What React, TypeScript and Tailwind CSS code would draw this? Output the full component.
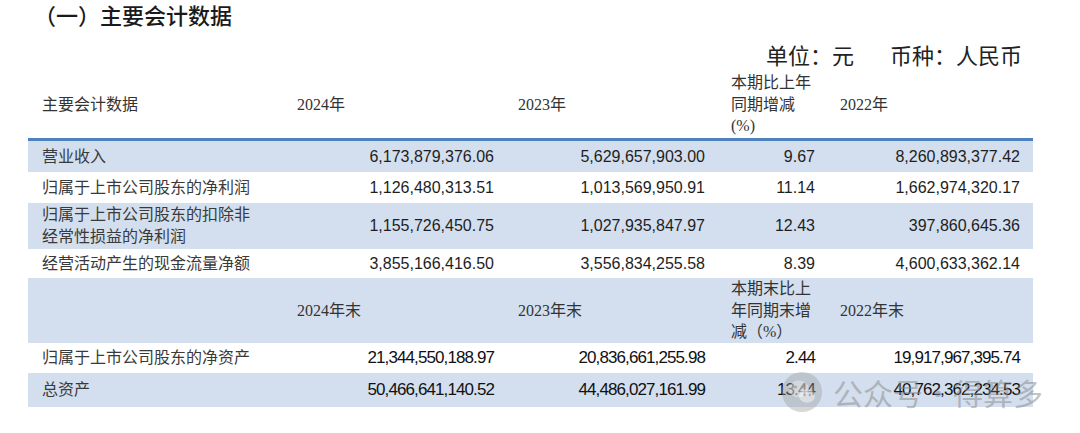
import React from "react";

const cjk = "font-['Liberation_Serif','Noto_Sans_CJK_SC',serif]";
const num = "font-['Liberation_Sans',Arial,sans-serif]";

type Row = {
  label: React.ReactNode;
  values: string[];
  h: string;
  blue?: boolean;
  big?: boolean;
};

const rows: Row[] = [
  { label: "营业收入", values: ["6,173,879,376.06", "5,629,657,903.00", "9.67", "8,260,893,377.42"], h: "h-[31px]", blue: true },
  { label: "归属于上市公司股东的净利润", values: ["1,126,480,313.51", "1,013,569,950.91", "11.14", "1,662,974,320.17"], h: "h-[31px]" },
  {
    label: (
      <>
        归属于上市公司股东的扣除非
        <br />
        经常性损益的净利润
      </>
    ),
    values: ["1,155,726,450.75", "1,027,935,847.97", "12.43", "397,860,645.36"],
    h: "h-[46px]",
    blue: true,
  },
  { label: "经营活动产生的现金流量净额", values: ["3,855,166,416.50", "3,556,834,255.58", "8.39", "4,600,633,362.14"], h: "h-[29px]" },
];

const rows2: Row[] = [
  { label: "归属于上市公司股东的净资产", values: ["21,344,550,188.97", "20,836,661,255.98", "2.44", "19,917,967,395.74"], h: "h-[30px]", big: true },
  { label: "总资产", values: ["50,466,641,140.52", "44,486,027,161.99", "13.44", "40,762,362,234.53"], h: "h-[34px]", blue: true, big: true },
];

const pads = ["pr-[17px]", "pr-[19px]", "pr-[18px]", "pr-[13px]"];

const grid = "grid grid-cols-[262px_221px_213px_109px_200px] items-center";

const DataRow = ({ row }: { row: Row }) => (
  <div className={`${grid} ${row.h} ${row.blue ? "bg-[#d3dfee]" : "bg-white"}`}>
    <div className={`${cjk} pl-[14px] text-[16px] leading-[22px] text-[#3a3a3a]`}>{row.label}</div>
    {row.values.map((v, i) => (
      <div
        key={i}
        className={`${num} ${pads[i]} text-right ${
          row.big ? "text-[17px] tracking-[-0.9px] text-[#111]" : "text-[16px] text-[#1e1e1e]"
        }`}
      >
        {v}
      </div>
    ))}
  </div>
);

const HeadCell = ({ children }: { children: React.ReactNode }) => (
  <div className={`${cjk} pl-[7px] text-[16px] leading-[21.5px] text-[#333]`}>{children}</div>
);

const WeChatIcon = () => (
  <svg width="40" height="40" viewBox="0 0 40 40">
    <circle cx="20" cy="20" r="20" fill="#9a9a9a" fillOpacity="0.4" />
    <ellipse cx="17" cy="17" rx="10" ry="8.5" fill="#fff" fillOpacity="0.35" />
    <ellipse cx="25" cy="24" rx="8" ry="6.8" fill="#fff" fillOpacity="0.45" />
    <circle cx="13.5" cy="15" r="1.5" fill="#8a8a8a" fillOpacity="0.6" />
    <circle cx="20.5" cy="15" r="1.5" fill="#8a8a8a" fillOpacity="0.6" />
    <circle cx="22.5" cy="23" r="1.2" fill="#8a8a8a" fillOpacity="0.6" />
    <circle cx="27.8" cy="23" r="1.2" fill="#8a8a8a" fillOpacity="0.6" />
  </svg>
);

export default function App() {
  return (
    <div className="relative w-[1080px] h-[433px] overflow-hidden bg-white">
      <div className="h-[30px] pl-[34px] font-['Noto_Sans_CJK_SC',sans-serif] text-[22px] font-medium leading-[28px] text-[#1a1a1a]">
        （一）主要会计数据
      </div>
      <div className={`${cjk} mt-[13px] h-[28px] pr-[58px] text-right text-[22px] leading-[28px] text-[#222]`}>
        单位：元<span className="inline-block w-[36px]" />币种：人民币
      </div>
      <div className="ml-[28px] w-[1005px]">
        <div className={`${grid} h-[67px] border-b-[3px] border-[#4f81bd] box-content`}>
          <div className={`${cjk} pl-[14px] text-[16px] text-[#333]`}>主要会计数据</div>
          <HeadCell>2024年</HeadCell>
          <HeadCell>2023年</HeadCell>
          <HeadCell>
            本期比上年
            <br />
            同期增减
            <br />
            (%)
          </HeadCell>
          <HeadCell>2022年</HeadCell>
        </div>
        {rows.map((r, i) => (
          <DataRow key={i} row={r} />
        ))}
        <div className={`${grid} h-[65px] bg-[#d3dfee]`}>
          <div />
          <HeadCell>2024年末</HeadCell>
          <HeadCell>2023年末</HeadCell>
          <HeadCell>
            本期末比上
            <br />
            年同期末增
            <br />
            减（%）
          </HeadCell>
          <HeadCell>2022年末</HeadCell>
        </div>
        {rows2.map((r, i) => (
          <DataRow key={i} row={r} />
        ))}
      </div>
      {/* watermark */}
      <div className="pointer-events-none absolute left-[782px] top-[372px] flex items-center">
        <WeChatIcon />
        <div className="ml-[11px] flex items-center font-['Noto_Sans_CJK_SC',sans-serif] text-[30px] leading-[36px] text-[#888]/50">
          <span>公众号</span>
          <span className="w-[30px] text-center">·</span>
          <span>得算多</span>
        </div>
      </div>
    </div>
  );
}
